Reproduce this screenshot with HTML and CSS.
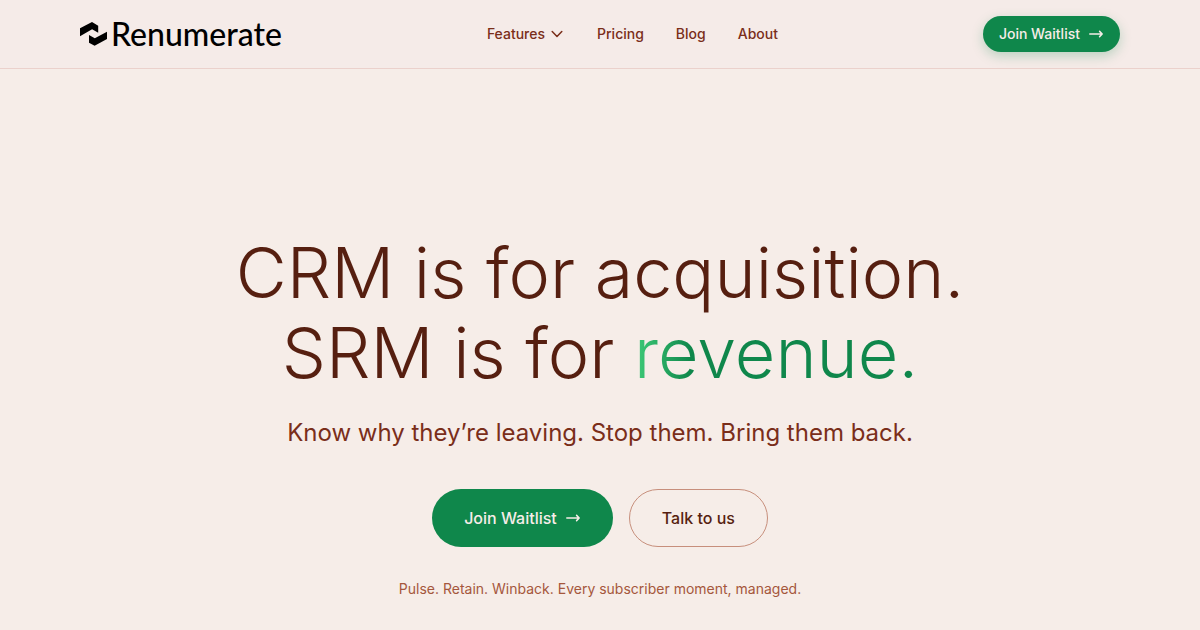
FILE: index.html
```html
<!DOCTYPE html>
<html lang="en">
  <head>
    <meta charset="UTF-8" />
    <meta name="viewport" content="width=device-width, initial-scale=1.0" />
    <title>Renumerate</title>
    <link rel="stylesheet" href="styles.css">
  </head>
  <body>
    <header class="header">
      <a href="#" class="logo">
        <svg class="logoMark" viewBox="0 0 27 24" aria-hidden="true">
          <path d="M0 6.2 12 0.1 18.2 3.8V10.7L12.1 7.2 0 14.2Z" />
          <path d="M27 9.7V17L14.6 23.8 9 20.8V13.1L14.8 16.3Z" />
        </svg>
        <span>Renumerate</span>
      </a>
      <nav class="nav">
        <button type="button" class="navLink">
          Features
          <svg class="chevron" viewBox="0 0 16 16" aria-hidden="true">
            <path d="M3.2 5.5 8 10.5 12.8 5.5" />
          </svg>
        </button>
        <a href="#" class="navLink">Pricing</a>
        <a href="#" class="navLink">Blog</a>
        <a href="#" class="navLink">About</a>
      </nav>
      <button type="button" class="btn btnSmall">
        Join Waitlist
        <svg class="arrow" viewBox="0 0 16 16" aria-hidden="true">
          <path d="M1.8 8H14.2M11.6 5.4 14.2 8 11.6 10.6" />
        </svg>
      </button>
    </header>

    <main class="hero">
      <h1 class="title">
        CRM is for acquisition.<br />
        SRM is for <span class="revenue">revenue.</span>
      </h1>
      <p class="subtitle">Know why they’re leaving. Stop them. Bring them back.</p>
      <div class="actions">
        <button type="button" class="btn btnLarge">
          Join Waitlist
          <svg class="arrow" viewBox="0 0 16 16" aria-hidden="true">
            <path d="M1.8 8H14.2M11.6 5.4 14.2 8 11.6 10.6" />
          </svg>
        </button>
        <button type="button" class="btn btnLarge btnOutline">Talk to us</button>
      </div>
      <p class="note">Pulse. Retain. Winback. Every subscriber moment, managed.</p>
    </main>
  </body>
</html>
```
FILE: styles.css
```css
* {
  padding: 0;
  margin: 0;
  box-sizing: border-box;
}
body {
  background-color: #f6ede8;
  color: #561f10;
  font-family: Inter, "Liberation Sans", sans-serif;
}
a {
  color: inherit;
  text-decoration: none;
}
button {
  font-family: inherit;
  border: none;
  background: none;
  cursor: pointer;
}
svg {
  flex-shrink: 0;
}

.header {
  display: flex;
  justify-content: space-between;
  align-items: center;
  padding: 16px 80px;
  background-color: #f5ebe8;
  border-bottom: 1px solid #ebd1cc;
}
.logo {
  display: flex;
  align-items: center;
  gap: 4px;
  color: black;
  font-family: Lato, "Liberation Sans", sans-serif;
  font-size: 32px;
  font-weight: 500;
  line-height: 36px;
}
.logoMark {
  width: 27px;
  height: 24px;
}
.nav {
  display: flex;
  align-items: center;
  gap: 32px;
}
.navLink {
  display: flex;
  align-items: center;
  gap: 4px;
  color: #7a2e1a;
  font-size: 14px;
  font-weight: 500;
  line-height: 20px;
}
.chevron,
.arrow {
  width: 16px;
  height: 16px;
  fill: none;
  stroke: currentColor;
  stroke-width: 1.5;
  stroke-linecap: round;
  stroke-linejoin: round;
}

.btn {
  display: flex;
  align-items: center;
  gap: 8px;
  border-radius: 32px;
  background-color: #0f874b;
  color: #f6ede8;
  font-weight: 500;
}
.btnSmall {
  padding: 8px 16px;
  font-size: 14px;
  line-height: 20px;
  box-shadow: 0 4px 12px rgba(15, 135, 75, 0.25);
}
.btnLarge {
  padding: 17px 32px;
  font-size: 16px;
  line-height: 24px;
}
.btnOutline {
  padding: 16px 32px;
  border: 1px solid #c78f7c;
  background: none;
  color: #561f10;
}

.hero {
  display: flex;
  flex-direction: column;
  align-items: center;
  padding: 164px 24px 30px;
  text-align: center;
}
.title {
  font-size: 70px;
  font-weight: 300;
  line-height: 80px;
}
.revenue {
  background: linear-gradient(90deg, #3fcb78, #0f874b 20%);
  -webkit-background-clip: text;
  background-clip: text;
  color: transparent;
}
.subtitle {
  margin-top: 24px;
  color: #7a2e1a;
  font-size: 24px;
  line-height: 32px;
}
.actions {
  display: flex;
  gap: 16px;
  margin-top: 40px;
}
.note {
  margin-top: 32px;
  color: #a5573c;
  font-size: 14px;
  line-height: 20px;
}
```
